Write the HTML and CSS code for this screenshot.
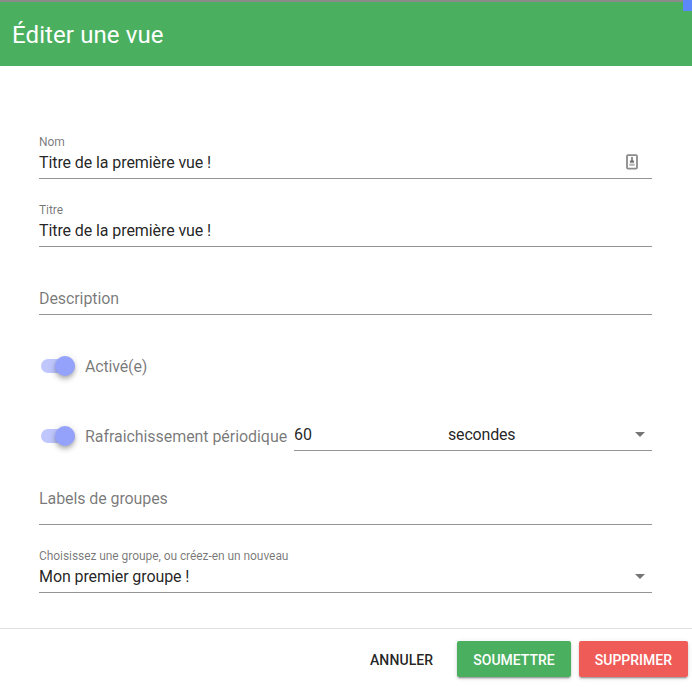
FILE: index.html
```
<!DOCTYPE html>
<html lang="fr">
<head>
<meta charset="utf-8">
<title>Éditer une vue</title>
<link rel="stylesheet" href="styles.css">
</head>
<body>
<div class="dialog">
  <div class="backdrop"></div>
  <div class="corner"></div>
  <header class="toolbar"><h1>Éditer une vue</h1></header>
  <main class="content">
    <div class="field">
      <span class="label">Nom</span>
      <span class="value">Titre de la première vue !</span>
      <svg class="autofill" width="14" height="18" viewBox="0 0 14 18">
        <rect x="2" y="2.2" width="10" height="13.4" rx="1" fill="#fff" stroke="#8b8b8b" stroke-width="1.8"/>
        <path d="M6.2 4h1.6v2.8l1.3 1.5v1.4H4.9V8.300l1.300-1.500z" fill="#777"/>
        <rect x="4.400" y="10.600" width="5.200" height="2.200" fill="#b5b5b5"/>
      </svg>
    </div>
    <div class="field">
      <span class="label">Titre</span>
      <span class="value">Titre de la première vue !</span>
    </div>
    <div class="field">
      <span class="label"></span>
      <span class="value hint">Description</span>
    </div>
    <div class="switch-row">
      <span class="switch"><span class="thumb"></span></span>
      <span class="switch-label short">Activé(e)</span>
    </div>
    <div class="refresh-row">
      <div class="switch-row">
        <span class="switch"><span class="thumb"></span></span>
        <span class="switch-label">Rafraichissement périodique</span>
      </div>
      <div class="field period">
        <span class="value amount">60</span>
        <span class="value unit">secondes</span>
        <span class="arrow"></span>
      </div>
    </div>
    <div class="field chips">
      <span class="value hint">Labels de groupes</span>
    </div>
    <div class="field select">
      <span class="label">Choisissez une groupe, ou créez-en un nouveau</span>
      <div class="select-line">
        <span class="value">Mon premier groupe !</span>
        <span class="arrow"></span>
      </div>
    </div>
  </main>
  <footer class="actions">
    <button class="btn flat">Annuler</button>
    <button class="btn success">Soumettre</button>
    <button class="btn danger">Supprimer</button>
  </footer>
</div>
</body>
</html>
```
FILE: styles.css
```
* { box-sizing: border-box; }
body {
  margin: 0;
  background: #fff;
  font-family: Roboto, "Liberation Sans", sans-serif;
  color: rgba(0, 0, 0, 0.87);
}
.dialog {
  position: relative;
  display: flex;
  flex-direction: column;
  height: 687px;
  overflow: hidden;
}
.backdrop { height: 2px; background: #8b8b8b; }
.corner {
  position: absolute;
  top: 0;
  right: 0;
  width: 9px;
  height: 11px;
  background: #5c88fb;
}
.toolbar {
  display: flex;
  align-items: center;
  height: 64px;
  padding: 2px 12px 0;
  background: #4ab05f;
  color: #fff;
}
.toolbar h1 {
  margin: 0;
  font-size: 24px;
  font-weight: 400;
  line-height: 32px;
  letter-spacing: 0.1px;
}
.content {
  display: flex;
  flex-direction: column;
  flex: 1;
  padding: 65px 40px 0 39px;
}
.field {
  position: relative;
  display: flex;
  flex-direction: column;
  height: 48px;
  margin-bottom: 20px;
  padding-top: 3px;
  border-bottom: 1px solid #949494;
}
.label {
  height: 17px;
  font-size: 12px;
  line-height: 16px;
  letter-spacing: -0.065px;
  color: rgba(0, 0, 0, 0.54);
}
.value {
  font-size: 16px;
  line-height: 24px;
  letter-spacing: -0.09px;
}
.hint { color: rgba(0, 0, 0, 0.54); }
.autofill {
  position: absolute;
  right: 13px;
  top: 22px;
}
.switch-row {
  display: flex;
  align-items: center;
  height: 24px;
  margin-top: 19px;
  padding-left: 2px;
}
.switch {
  display: flex;
  align-items: center;
  justify-content: flex-end;
  width: 34px;
  height: 14px;
  margin-right: 10px;
  border-radius: 7px;
  background: #bfc7fd;
}
.thumb {
  flex: none;
  width: 20px;
  height: 20px;
  border-radius: 50%;
  background: #94a2fc;
  box-shadow: 0 2px 4px -1px rgba(0, 0, 0, 0.2), 0 4px 5px rgba(0, 0, 0, 0.14), 0 1px 10px rgba(0, 0, 0, 0.12);
}
.switch-label {
  padding-top: 2px;
  font-size: 16px;
  line-height: 24px;
  letter-spacing: -0.06px;
  color: rgba(0, 0, 0, 0.54);
  white-space: nowrap;
}
.short { letter-spacing: -0.16px; }
.refresh-row {
  display: flex;
  height: 48px;
  margin-top: 25px;
}
.refresh-row .switch-row { margin-top: 21px; }
.period {
  flex-direction: row;
  flex: none;
  width: 358px;
  align-items: center;
  margin: 0 0 0 auto;
  padding-top: 16px;
}
.amount { width: 154px; }
.unit { letter-spacing: -0.18px; }
.arrow {
  margin: 0 7px 0 auto;
  border: 5px solid transparent;
  border-top-color: #757575;
  border-bottom: 0;
}
.chips {
  height: 50px;
  margin: 24px 0 20px;
  padding-top: 12px;
}
.select { margin-bottom: 0; }
.select-line { display: flex; align-items: center; }
.select .arrow { margin-top: -2px; }
.actions {
  display: flex;
  align-items: flex-start;
  justify-content: flex-end;
  gap: 8px;
  height: 59px;
  padding: 12px 4px 0;
  border-top: 1px solid #e0e0e0;
}
.btn {
  height: 36px;
  padding: 2px 16px 0;
  border: 0;
  border-radius: 2px;
  background: none;
  font: 500 14px/20px Roboto, "Liberation Sans", sans-serif;
  text-transform: uppercase;
  color: rgba(0, 0, 0, 0.87);
}
.flat { letter-spacing: 0.1px; }
.success, .danger {
  color: #fff;
  box-shadow: 0 3px 1px -2px rgba(0, 0, 0, 0.2), 0 2px 2px rgba(0, 0, 0, 0.14), 0 1px 5px rgba(0, 0, 0, 0.12);
}
.success { background: #4ab05f; }
.danger { background: #ef5c58; }
```
